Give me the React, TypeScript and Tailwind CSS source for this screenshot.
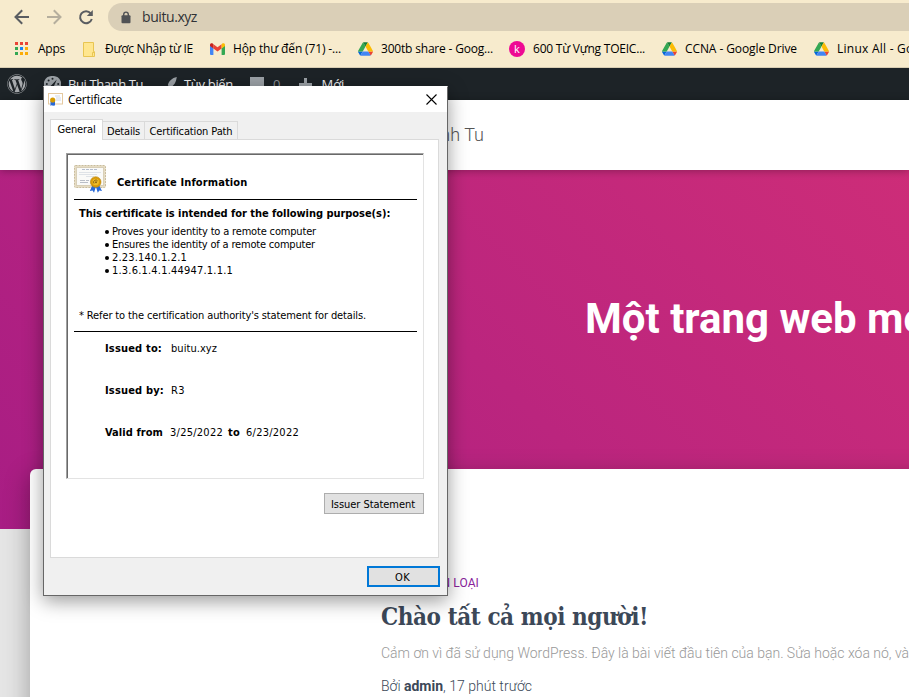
import { useLayoutEffect, useRef, useState } from 'react';
import { FaWordpress } from 'react-icons/fa';

const count = (s: string) => Array.from(s.normalize('NFC')).length;

/** Single line of text whose tracking is adjusted to fill a given width. */
function Fit({ w, children, className = '' }: { w: number; children: string; className?: string }) {
  const ref = useRef<HTMLSpanElement>(null);
  const [gap, setGap] = useState(0);
  useLayoutEffect(() => {
    const el = ref.current;
    if (el) setGap((w - el.getBoundingClientRect().width) / count(children));
  }, []);
  return (
    <span ref={ref} className={`inline-block shrink-0 whitespace-pre ${className}`} style={{ letterSpacing: gap }}>
      {children}
    </span>
  );
}

function AppsIcon() {
  const colors = ['#ea4335', '#ea4335', '#ea4335', '#34a853', '#1a84f4', '#fbab06', '#34a853', '#fbab06', '#fbab06'];
  return (
    <svg width="14" height="14" viewBox="0 0 14 14" className="shrink-0" shapeRendering="crispEdges">
      {colors.map((c, i) => (
        <rect key={i} x={(i % 3) * 5} y={Math.floor(i / 3) * 5} width="3" height="3" fill={c} />
      ))}
    </svg>
  );
}

function FolderIcon() {
  return (
    <svg width="13" height="15" viewBox="0 0 13 15" className="shrink-0">
      <path d="M.5.5h10v9.2h1v4.8H.5z" fill="#ffe68f" stroke="#e8c552" />
      <path d="M9.5 13.8V10.5h2" fill="none" stroke="#e8c552" />
    </svg>
  );
}

function GmailIcon() {
  return (
    <svg width="15" height="12" viewBox="0 0 15 12" className="shrink-0">
      <path d="M0 2.5 3.4 5v7H1a1 1 0 0 1-1-1z" fill="#4285f4" />
      <path d="M15 2.5 11.6 5v7H14a1 1 0 0 0 1-1z" fill="#34a853" />
      <path d="M3.4 1.2 7.5 4.3l4.1-3.1v4.3L7.5 8.6 3.4 5.5z" fill="#ea4335" />
      <path d="M0 3V1.7C0 .2 1.7-.3 2.7.6l.7.6v4.3z" fill="#c5221f" />
      <path d="M15 3V1.7c0-1.5-1.7-2-2.7-1.1l-.7.6v4.3z" fill="#fbbc04" />
    </svg>
  );
}

function DriveIcon() {
  return (
    <svg width="15" height="14" viewBox="0 0 87.3 78" className="shrink-0">
      <path d="m6.6 66.85 3.85 6.65c.8 1.4 1.95 2.5 3.3 3.3L27.5 53H0c0 1.55.4 3.1 1.2 4.5z" fill="#0066da" />
      <path d="m43.65 25-13.75-23.8c-1.35.8-2.5 1.9-3.3 3.3L1.2 48.5A9 9 0 0 0 0 53h27.5z" fill="#34a853" />
      <path d="M73.55 76.8c1.35-.8 2.5-1.9 3.3-3.3l1.6-2.75L86.1 57.5c.8-1.4 1.2-2.95 1.2-4.5H59.8l5.85 11.5z" fill="#ea4335" />
      <path d="M43.65 25 57.4 1.2C56.05.4 54.5 0 52.9 0H34.4c-1.6 0-3.15.45-4.5 1.2z" fill="#188038" />
      <path d="M59.8 53H27.5L13.75 76.8c1.35.8 2.9 1.2 4.5 1.2h50.8c1.6 0 3.15-.45 4.5-1.2z" fill="#4285f4" />
      <path d="M73.4 26.5 60.7 4.5c-.8-1.4-1.95-2.5-3.3-3.3L43.65 25 59.8 53h27.45c0-1.55-.4-3.1-1.2-4.5z" fill="#fbbc04" />
    </svg>
  );
}

function CertificateIcon() {
  return (
    <svg width="32" height="29" viewBox="0 0 32 29" className="shrink-0">
      <rect x=".5" y=".5" width="31" height="22" rx="1" fill="#e6dcc3" stroke="#c9bc9c" strokeDasharray="2 1" />
      <rect x="2.5" y="2.5" width="27" height="18" fill="#fafaf8" stroke="#d8cfb8" />
      <path d="M8 4.5h16" stroke="#b4bccd" strokeDasharray="3 1" />
      <path d="M5 7.5h22M5 9.5h18M12 11.5h8" stroke="#d3d8e0" strokeWidth=".7" />
      <path d="M6 15.5h5m1 0h3M6 17.5h8" stroke="#b2b7c0" strokeWidth=".9" />
      <path d="m18.5 20-2.7 6 2.8-.6 1.4 2.3 2-6.3zM25 20l3 6-2.7-.6-1.5 2.3-2-6.3z" fill="#2869d8" />
      <circle cx="21.7" cy="17" r="5.3" fill="#d99a08" stroke="#b8860b" strokeWidth=".6" />
      <circle cx="21.7" cy="17" r="3.2" fill="#f0bd28" />
      <path d="M20 18.5a2.2 2.2 0 0 1 3.6-2.6" fill="none" stroke="#8a6512" />
      <circle cx="22" cy="17.3" r="1" fill="#8a6512" />
    </svg>
  );
}

function SmallCertificateIcon() {
  return (
    <svg width="15" height="13" viewBox="0 0 15 13" className="shrink-0">
      <rect x=".5" y=".5" width="14" height="10.5" fill="#fff" stroke="#e4c9a0" />
      <path d="M7 3h5M8 5h5M8 7h5" stroke="#dfe5f0" strokeWidth="1.5" />
      <path d="M2.5 8v5l1.5-1 1 1V8z" fill="#2869d8" />
      <path d="M4.5 8v4l1.5 1 1-1V8z" fill="#2869d8" />
      <circle cx="4.7" cy="7" r="2.6" fill="#d69a00" />
    </svg>
  );
}

const bookmarks = [
  { box: 'pl-[15px] w-[68px] gap-[9px]', icon: <AppsIcon />, label: 'Apps', w: 27 },
  { box: 'pl-[15px] w-[127px] gap-[9px]', icon: <FolderIcon />, label: 'Được Nhập từ IE', w: 88 },
  { box: 'pl-[15px] w-[148px] gap-[8px]', icon: <GmailIcon />, label: 'Hộp thư đến (71) -...', w: 108 },
  { box: 'pl-[15px] w-[151px] gap-[8px]', icon: <DriveIcon />, label: '300tb share - Goog...', w: 112 },
  {
    box: 'pl-[15px] w-[153px] gap-[8px]',
    icon: (
      <span className="flex size-4 shrink-0 items-center justify-center rounded-full bg-[#ee0a93] pb-px text-[11px] leading-none text-white">
        k
      </span>
    ),
    label: '600 Từ Vựng TOEIC...',
    w: 112,
  },
  { box: 'pl-[15px] w-[152px] gap-[8px]', icon: <DriveIcon />, label: 'CCNA - Google Drive', w: 112 },
  { box: 'pl-[15px] w-[170px] gap-[8px]', icon: <DriveIcon />, label: 'Linux All - Google Drive', w: 135 },
];

function Chrome() {
  return (
    <div className="h-[68px] shrink-0 border-b border-[#d8cdb2] bg-[#f7ebcd] font-['Open_Sans','Noto_Sans',sans-serif] text-black">
      <div className="flex h-[34px] items-center">
        <svg width="108" height="34" viewBox="0 0 108 34" className="shrink-0" fill="none" strokeWidth="2">
          <path d="M29 17H16M22.2 10.3 15.5 17l6.7 6.7" stroke="#5a5d61" />
          <path d="M47 17h13M53.8 10.3l6.7 6.7-6.7 6.7" stroke="#b5ae9d" />
          <path d="M90.7 13.3A6 6 0 1 0 91.8 19" stroke="#5a5d61" />
          <path d="M92.8 10v6h-6z" fill="#5a5d61" />
        </svg>
        <div className="flex h-7 grow items-center rounded-l-full bg-[#dacfb7] pl-[13px]">
          <svg width="10" height="13" viewBox="0 0 10 13" className="shrink-0">
            <path d="M2.7 5V3.4a2.3 2.3 0 0 1 4.6 0V5" fill="none" stroke="#505255" strokeWidth="1.4" />
            <rect x=".5" y="4.3" width="9" height="8" rx="1" fill="#505255" />
          </svg>
          <div className="ml-[11px] text-[14px] leading-5 text-[#303236]">
            <Fit w={55}>buitu.xyz</Fit>
          </div>
        </div>
      </div>
      <div className="flex h-[30px] items-center overflow-hidden text-[12px] leading-5">
        {bookmarks.map((b) => (
          <div key={b.label} className={`flex shrink-0 items-center ${b.box}`}>
            {b.icon}
            <Fit w={b.w}>{b.label}</Fit>
          </div>
        ))}
      </div>
    </div>
  );
}

function AdminBar() {
  return (
    <div className="flex h-8 shrink-0 items-center bg-[#1d2327] pl-[7px] font-['Open_Sans','Noto_Sans',sans-serif] text-[13px] leading-5 text-[#f0f0f1]">
      <FaWordpress className="size-5 shrink-0 text-[#a7aaad]" />
      <svg width="17" height="16" viewBox="0 0 17 16" className="ml-[17px] shrink-0">
        <path d="M8.5 0A8.3 8.3 0 0 0 2 14h13A8.3 8.3 0 0 0 8.5 0z" fill="#9ca2a7" />
        <g fill="#1d2327">
          <circle cx="8.5" cy="2.8" r="1" />
          <circle cx="4.6" cy="4.4" r="1" />
          <circle cx="2.8" cy="8" r="1" />
          <circle cx="14.2" cy="8" r="1" />
          <path d="m12.8 3.5-3 7a1.6 1.6 0 1 1-2.2-1.5z" />
        </g>
      </svg>
      <Fit w={75} className="ml-[7px]">Bui Thanh Tu</Fit>
      <svg width="13" height="15" viewBox="0 0 13 15" className="ml-[21px] shrink-0">
        <path d="M12.8 0C8 1 4.8 4 3.8 8.2l2.5 2.3C10.5 8.5 12 5 12.8 0zM3 9c-2 1-1 3.5-3 4.6 2.7.7 5 0 5.6-2.3z" fill="#9ca2a7" />
      </svg>
      <Fit w={49} className="ml-[7px]">Tùy biến</Fit>
      <svg width="15" height="15" viewBox="0 0 15 15" className="ml-[17px] shrink-0">
        <path d="M0 0h14v11H8l-4 4v-4H0z" fill="#9ca2a7" />
      </svg>
      <span className="ml-[8px] text-[#8c9197]">0</span>
      <svg width="13" height="13" viewBox="0 0 13 13" className="ml-[19px] shrink-0">
        <path d="M5 0h3v5h5v3H8v5H5V8H0V5h5z" fill="#9ca2a7" />
      </svg>
      <Fit w={23} className="ml-[9px]">Mới</Fit>
    </div>
  );
}

function Dialog() {
  return (
    <section className="absolute left-[43px] top-[86px] z-20 flex h-[510px] w-[405px] flex-col border border-[#666] border-t-white bg-[#f0f0f0] font-['DejaVu_Sans_Condensed','DejaVu_Sans',sans-serif] text-[11px] leading-[13px] text-black shadow-[0_5px_18px_rgba(0,0,0,0.4)] [font-stretch:condensed]">
      <header className="flex h-[25px] shrink-0 items-center bg-white pl-1 font-['Open_Sans','Noto_Sans',sans-serif] text-[12px] [font-stretch:normal]">
        <SmallCertificateIcon />
        <Fit w={54} className="ml-[5px]">Certificate</Fit>
        <svg width="11" height="11" viewBox="0 0 11 11" className="ml-auto mr-[10px]">
          <path d="m.5.5 10 10m0-10-10 10" stroke="#000" strokeWidth="1.1" />
        </svg>
      </header>
      <div className="ml-1.5 mt-[7px] flex h-[21px] shrink-0 items-end">
        <div className="relative z-10 flex h-[21px] w-[53px] justify-center border border-b-0 border-[#dadada] bg-white pt-[3px]">
          <Fit w={38}>General</Fit>
        </div>
        <div className="flex h-[19px] w-[41px] justify-center border-t border-[#dadada] pt-[3px]">
          <Fit w={33}>Details</Fit>
        </div>
        <div className="flex h-[19px] w-[94px] justify-center border border-b-0 border-[#dadada] pt-[3px]">
          <Fit w={83}>Certification Path</Fit>
        </div>
      </div>
      <div className="-mt-px ml-1.5 h-[419px] w-[389px] shrink-0 border border-[#dadada] bg-white px-[15px] pt-[13px]">
        <div className="h-[326px] w-[358px] border border-[#e3e3e3] border-l-[#a0a0a0] border-t-[#a0a0a0]">
          <div className="h-full border-l border-t border-[#696969] px-1.5">
            <div className="flex h-[45px] w-[343px] items-start border-b border-black pt-[10px]">
              <CertificateIcon />
              <Fit w={130} className="ml-[11px] mt-[11px] font-bold">Certificate Information</Fit>
            </div>
            <div className="flex h-[132px] w-[343px] flex-col border-b border-black pl-[5px] pt-[7px]">
              <Fit w={311} className="self-start font-bold">This certificate is intended for the following purpose(s):</Fit>
              <ul className="ml-[26px] mt-[5px]">
                {[
                  { t: 'Proves your identity to a remote computer', w: 204 },
                  { t: 'Ensures the identity of a remote computer', w: 203 },
                  { t: '2.23.140.1.2.1', w: 75 },
                  { t: '1.3.6.1.4.1.44947.1.1.1', w: 121 },
                ].map((r) => (
                  <li key={r.t} className="flex h-[13px] items-center">
                    <span className="mr-[3px] size-1 shrink-0 rounded-full bg-black" />
                    <Fit w={r.w}>{r.t}</Fit>
                  </li>
                ))}
              </ul>
              <Fit w={287} className="mt-8 self-start">* Refer to the certification authority's statement for details.</Fit>
            </div>
            <div className="ml-[31px] mt-[10px] flex flex-col gap-[29px]">
              <p className="flex h-[13px]">
                <Fit w={57} className="font-bold">Issued to:</Fit>
                <Fit w={46} className="ml-[9px]">buitu.xyz</Fit>
              </p>
              <p className="flex h-[13px]">
                <Fit w={59} className="font-bold">Issued by:</Fit>
                <Fit w={14} className="ml-[7px]">R3</Fit>
              </p>
              <p className="flex h-[13px]">
                <Fit w={58} className="font-bold">Valid from</Fit>
                <Fit w={53} className="ml-[7px]">3/25/2022</Fit>
                <Fit w={12} className="ml-[5px] font-bold">to</Fit>
                <Fit w={53} className="ml-[6px]">6/23/2022</Fit>
              </p>
            </div>
          </div>
        </div>
        <div className="-mr-px flex justify-end">
          <button className="mt-[14px] flex h-[21px] w-[100px] items-center justify-center border border-[#adadad] bg-[#e1e1e1] pr-0.5 pt-0.5">
            <Fit w={84}>Issuer Statement</Fit>
          </button>
        </div>
      </div>
      <button className="ml-[323px] mt-2 flex h-[21px] w-[73px] shrink-0 items-center justify-center border-2 border-[#0078d7] bg-[#e1e1e1] pr-0.5 pt-0.5">
        <Fit w={15}>OK</Fit>
      </button>
    </section>
  );
}

export default function App() {
  return (
    <div className="relative flex h-[697px] w-[909px] flex-col overflow-hidden bg-[#e5e5e5] font-['Roboto','Noto_Sans',sans-serif]">
      <Chrome />
      <AdminBar />
      <header className="relative z-[1] flex h-[70px] shrink-0 items-center bg-white shadow-[0_1px_8px_rgba(0,0,0,0.3)]">
        <div className="flex w-[484px] justify-end pb-px text-[18px] font-light text-[#555]">
          <Fit w={103}>Bui Thanh Tu</Fit>
        </div>
      </header>
      <div className="h-[359px] w-[1903px] shrink-0 bg-[linear-gradient(45deg,#a81d84_0%,#ea396f_100%)] pl-[585px] pt-[122px] text-[42px] font-bold leading-[54px] text-white">
        Một trang web mới sử dụng WordPress
      </div>
      <main className="relative z-[1] -mt-[60px] ml-[30px] h-[300px] w-[1843px] shrink-0 rounded-md bg-white pl-[351px] pt-[106px] shadow-[0_8px_24px_2px_rgba(0,0,0,0.28)]">
        <div className="flex h-4 w-[98px] justify-end text-[12px] leading-4 text-[#89229b]">
          <Fit w={98}>CHƯA PHÂN LOẠI</Fit>
        </div>
        <h2 className="mt-2 h-9 font-['DejaVu_Serif_Condensed','DejaVu_Serif',serif] text-[24px] font-bold leading-9 text-[#3c4858] [font-stretch:condensed]">
          <Fit w={267}>Chào tất cả mọi người!</Fit>
        </h2>
        <p className="mt-2 h-5 whitespace-nowrap text-[14px] font-light leading-5 text-[#999]">
          <Fit w={528}>Cảm ơn vì đã sử dụng WordPress. Đây là bài viết đầu tiên của bạn. Sửa hoặc xóa nó, và</Fit>
        </p>
        <p className="mt-[13px] flex text-[14px] font-light leading-5 text-[#3c4858]">
          <Fit w={23}>Bởi </Fit>
          <Fit w={39} className="font-bold">admin</Fit>
          <Fit w={89}>, 17 phút trước</Fit>
        </p>
      </main>
      <Dialog />
    </div>
  );
}
